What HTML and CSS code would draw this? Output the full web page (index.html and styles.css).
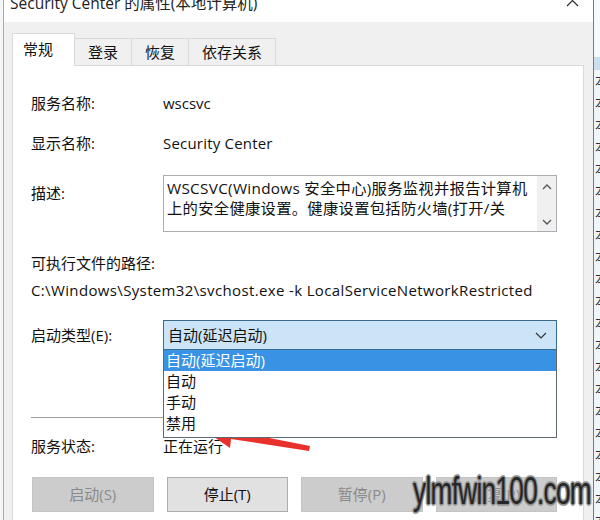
FILE: index.html
```html
<!DOCTYPE html>
<html lang="zh-CN">
<head>
<meta charset="utf-8">
<title>Security Center 的属性(本地计算机)</title>
<link rel="stylesheet" href="styles.css">
</head>
<body>
<div class="screen">
  <div class="edge"></div>
  <div class="window">
    <div class="titlebar">
      <span class="title">Security Center 的属性(本地计算机)</span>
      <svg class="close" width="13" height="12" viewBox="0 0 13 12"><path d="M1 -5 L12 6 M12 -5 L1 6" stroke="#2b2b2b" stroke-width="1.2" fill="none"/></svg>
    </div>
    <div class="dialog">
      <div class="tabs">
        <div class="tab tab-active">常规</div>
        <div class="tab">登录</div>
        <div class="tab">恢复</div>
        <div class="tab">依存关系</div>
      </div>
      <div class="panel">
        <div class="row">
          <span>服务名称:</span>
          <span>wscsvc</span>
        </div>
        <div class="row row-gap">
          <span>显示名称:</span>
          <span class="latin">Security Center</span>
        </div>
        <div class="row row-desc">
          <span class="desc-label">描述:</span>
          <div class="desc-box">
            <div class="desc-text">WSCSVC(Windows 安全中心)服务监视并报告计算机<br>上的安全健康设置。健康设置包括防火墙(打开/关</div>
            <div class="scrollbar">
              <svg width="10" height="6" viewBox="0 0 10 6"><path d="M1 5 L5 1 L9 5" stroke="#555" stroke-width="1.3" fill="none"/></svg>
              <svg width="10" height="6" viewBox="0 0 10 6"><path d="M1 1 L5 5 L9 1" stroke="#555" stroke-width="1.3" fill="none"/></svg>
            </div>
          </div>
        </div>
        <div class="path-label">可执行文件的路径:</div>
        <div class="path-value">C:\Windows\System32\svchost.exe -k LocalServiceNetworkRestricted</div>
        <div class="row row-gap">
          <span>启动类型(E):</span>
          <div class="select-wrap">
            <div class="select">
              <span>自动(延迟启动)</span>
              <svg width="12" height="7" viewBox="0 0 12 7"><path d="M1 1 L6 6 L11 1" stroke="#333" stroke-width="1.2" fill="none"/></svg>
            </div>
            <ul class="options">
              <li class="option-selected">自动(延迟启动)</li>
              <li>自动</li>
              <li>手动</li>
              <li>禁用</li>
            </ul>
          </div>
        </div>
        <div class="separator"></div>
        <div class="row status-row">
          <span>服务状态:</span>
          <span>正在运行</span>
        </div>
        <div class="buttons">
          <div class="btn btn-disabled">启动(S)</div>
          <div class="btn">停止(T)</div>
          <div class="btn btn-disabled">暂停(P)</div>
          <div class="btn btn-disabled">恢复(R)</div>
        </div>
      </div>
    </div>
  </div>
  <div class="behind">
    <div class="behind-top"></div>
    <div class="behind-sel"></div>
    <div class="behind-list">本<br>本<br>本<br>本<br>本<br>本<br>本<br>本<br>本<br>本<br>本<br>本<br>本<br>本<br>本<br>本<br>本<br>本<br>本<br>本<br>本</div>
  </div>

  <svg class="arrow" width="600" height="520" viewBox="0 0 600 520">
    <polygon points="204,430 235,422 233,431 310,446 309,451 231,439 230,448" fill="#e8302c"/>
  </svg>
  <div class="watermark">ylmfwin100.com</div>
</div>
</body>
</html>
```

FILE: styles.css
```css
* {
    box-sizing: border-box;
}
body {
    margin: 0;
    font-family: "Open Sans", "Noto Sans CJK SC", sans-serif;
    font-size: 15px;
    color: #111;
}
.screen {
    position: relative;
    display: flex;
    width: 600px;
    height: 520px;
    overflow: hidden;
    background: #fff;
}
.edge {
    width: 3px;
    background: #f4f6f7;
}
.window {
    width: 591px;
    border-left: 1px solid #8db3cc;
    border-right: 1px solid #6e7d88;
    display: flex;
    flex-direction: column;
}
.titlebar {
    height: 22px;
    background: #fff;
    position: relative;
    overflow: hidden;
}
.title {
    display: block;
    margin-top: -8px;
    padding-left: 6px;
    line-height: 22px;
    font-size: 15.5px;
    color: #222;
}
.close {
    position: absolute;
    left: 562px;
    top: 0;
}
.dialog {
    flex: 1;
    background: #f0f0f0;
    padding: 11px 9px 0 8px;
    display: flex;
    flex-direction: column;
}
.tabs {
    display: flex;
    align-items: flex-end;
    margin-bottom: -1px;
    position: relative;
    z-index: 1;
}
.tab {
    height: 28px;
    line-height: 26px;
    padding: 0 13px;
    border: 1px solid #d9d9d9;
    border-left: none;
    background: #f0f0f0;
}
.tab-active {
    height: 33px;
    line-height: 30px;
    padding: 0 11px 0 10px;
    background: #fff;
    border-left: 1px solid #d9d9d9;
    border-bottom: none;
    width: 63px;
}
.panel {
    flex: 1;
    background: #fff;
    border: 1px solid #d9d9d9;
    border-bottom: none;
    padding: 27px 26px 0 18px;
}
.row {
    display: grid;
    grid-template-columns: 132px 1fr;
    align-items: center;
    line-height: 20px;
}
.latin {
    letter-spacing: 0.2px;
}
.row-gap {
    margin-top: 20px;
}
.row-desc {
    margin-top: 22px;
    align-items: start;
}
.desc-label {
    padding-top: 8px;
}
.desc-box {
    height: 57px;
    border: 1px solid #abadb3;
    display: flex;
}
.desc-text {
    flex: 1;
    padding: 2px 0 0 3px;
    font-size: 15.3px;
    letter-spacing: 0.3px;
    white-space: nowrap;
    overflow: hidden;
}
.scrollbar {
    width: 19px;
    background: #f0f0f0;
    display: flex;
    flex-direction: column;
    justify-content: space-between;
    align-items: center;
    padding: 8px 0 6px;
}
.path-label {
    margin-top: 21px;
    line-height: 20px;
}
.path-value {
    margin-top: 7px;
    line-height: 20px;
    white-space: nowrap;
    letter-spacing: 0.36px;
}
.select-wrap {
    position: relative;
}
.select {
    height: 30px;
    border: 1px solid #3a6b8e;
    background: #cce4f7;
    display: flex;
    align-items: center;
    justify-content: space-between;
    padding: 0 9px 0 4px;
}
.options {
    position: absolute;
    left: 0;
    right: 0;
    top: 100%;
    margin: 0;
    padding: 0 0 3px;
    list-style: none;
    background: #fff;
    border: 1px solid #5f6a72;
    border-top: none;
    z-index: 2;
}
.options li {
    height: 21px;
    line-height: 21px;
    padding-left: 2px;
}
.options .option-selected {
    background: #3a92e4;
    color: #fff;
}
.separator {
    margin-top: 67px;
    height: 1px;
    background: #a0a0a0;
}
.status-row {
    margin-top: 18px;
}
.buttons {
    margin-top: 21px;
    display: grid;
    grid-template-columns: repeat(4, 1fr);
    gap: 13px;
    padding-left: 1px;
}
.btn {
    height: 35px;
    line-height: 33px;
    text-align: center;
    background: #e1e1e1;
    border: 1px solid #adadad;
}
.btn-disabled {
    background: #cccccc;
    border-color: #c4c4c4;
    color: #8a8a8a;
}
.behind {
    flex: 1;
    background: #eef6fa;
    overflow: hidden;
}
.behind-top {
    height: 57px;
    background: #f7fafc;
}
.behind-sel {
    height: 13px;
    background: #c9dff0;
}
.behind-list {
    padding-left: 1px;
    font-size: 14px;
    line-height: 22px;
    color: #333;
    white-space: nowrap;
}
.arrow {
    position: absolute;
    left: 0;
    top: 0;
    pointer-events: none;
}
.watermark {
    position: absolute;
    left: 413px;
    top: 469px;
    font-family: "Liberation Sans", sans-serif;
    font-size: 39px;
    line-height: 44px;
    color: #262626;
    transform: scaleX(0.67);
    transform-origin: left top;
    letter-spacing: -1px;
    text-shadow: 1px 1px 0 #8c8c8c, -1px -1px 0 #8c8c8c, 1px -1px 0 #8c8c8c, -1px 1px 0 #8c8c8c, 2px 0 1px #9a9a9a, -2px 0 1px #9a9a9a, 0 2px 1px #9a9a9a, 0 -2px 1px #9a9a9a;
}
```
